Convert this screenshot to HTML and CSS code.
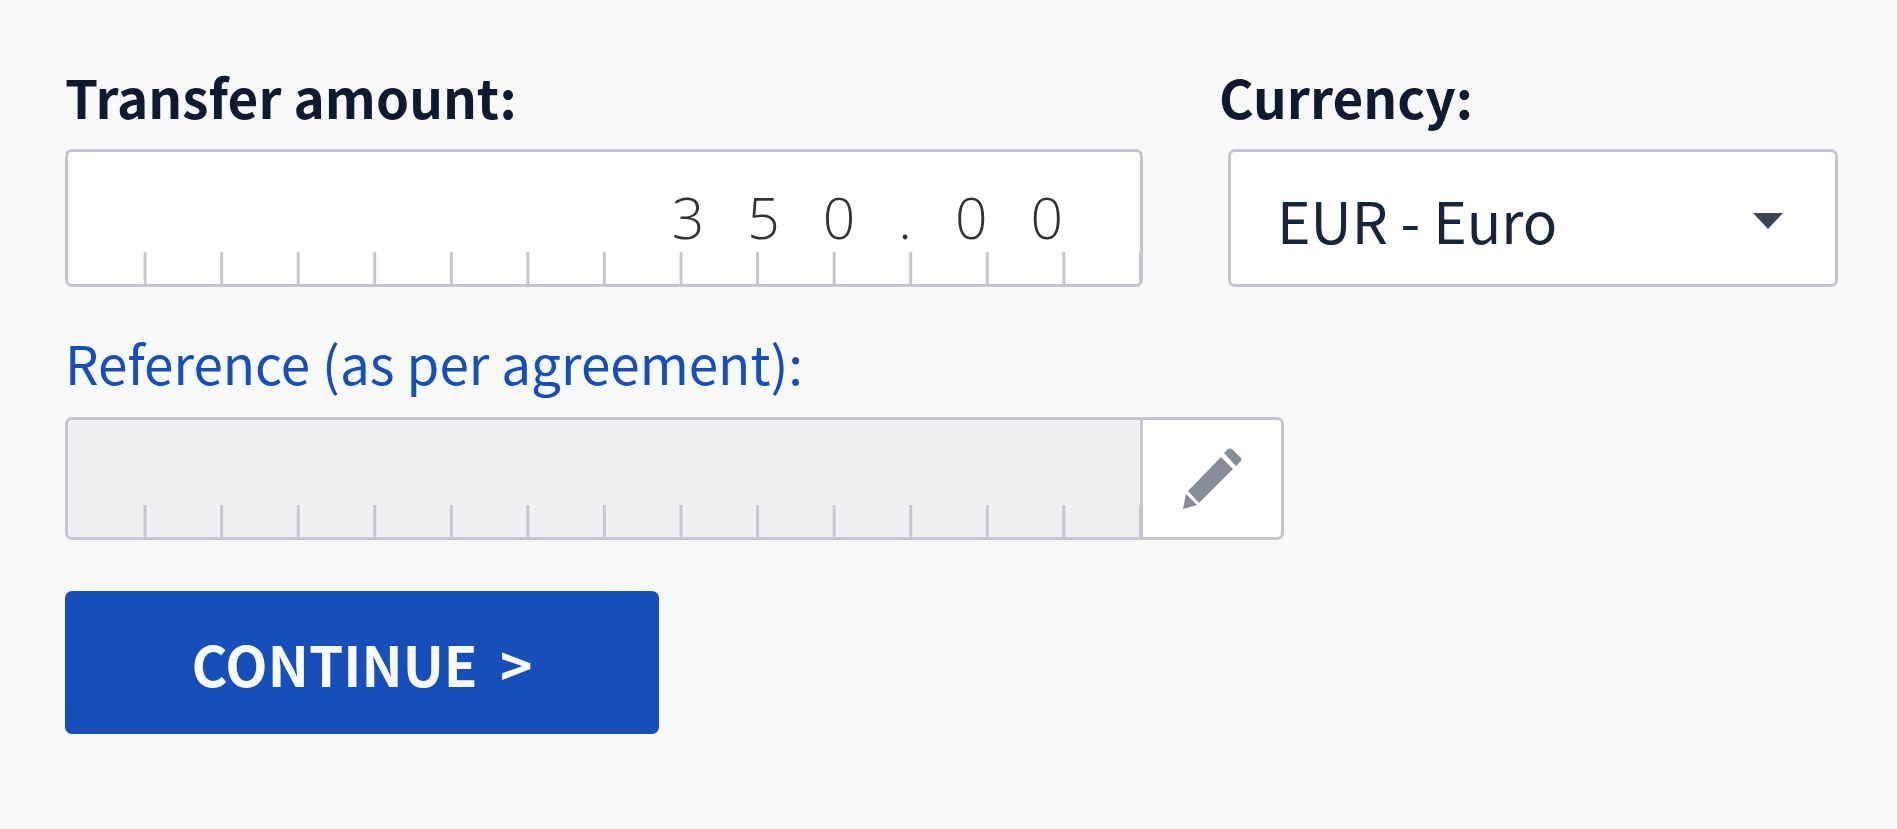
FILE: index.html
```html
<!DOCTYPE html>
<html lang="en">
<head>
    <meta charset="utf-8">
    <title>Transfer</title>
    <link rel="stylesheet" href="styles.css">
</head>
<body>
    <form class="transfer-form">
        <div class="form-row">
            <div class="form-group amount-group">
                <label for="amount">Transfer amount:</label>
                <input type="text" id="amount" class="comb amount" value="350.00" inputmode="decimal">
            </div>
            <div class="form-group currency-group">
                <label for="currency">Currency:</label>
                <div class="select-wrap">
                    <select id="currency">
                        <option value="EUR">EUR - Euro</option>
                    </select>
                    <svg class="arrow" viewBox="0 0 32 16" aria-hidden="true"><path d="M1 0h30L16 16z"/></svg>
                </div>
            </div>
        </div>

        <div class="form-group reference-group">
            <label for="reference" class="label-link">Reference (as per agreement):</label>
            <div class="input-group">
                <input type="text" id="reference" class="comb reference" readonly>
                <button type="button" class="button-edit" aria-label="Edit reference">
                    <svg viewBox="0 0 60 62" aria-hidden="true">
                        <path d="M42 5l4-4q2-1 4 0l9 9q1 2 0 3l-5 5z"/>
                        <path d="M39 9l12 12-34 34L6 43z"/>
                        <path d="M4 46l11 11-14 4z"/>
                    </svg>
                </button>
            </div>
        </div>

        <button type="submit" class="button-continue">CONTINUE <span class="chevron">&gt;</span></button>
    </form>
</body>
</html>
```

FILE: styles.css
```css
* {
    box-sizing: border-box;
}
body {
    margin: 0;
    background-color: #f8f9f9;
    color: #0d1a30;
    font-family: "Noto Sans CJK SC", "Noto Sans", sans-serif;
    font-size: 57px;
}
.transfer-form {
    padding: 65px 59px 60px 65px;
}
.form-row {
    display: flex;
    gap: 76px;
}
.amount-group {
    width: 60.8%;
}
.currency-group {
    flex: 1;
}
label {
    display: block;
    padding-bottom: 22px;
    font-size: 53px;
    font-weight: bold;
    line-height: 62px;
    white-space: nowrap;
}
.label-link {
    padding-bottom: 24px;
    color: #174fba;
    font-weight: normal;
}
input, select, button {
    margin: 0;
    font: inherit;
    color: inherit;
}
input, select {
    display: block;
    width: 100%;
    height: 138px;
    border: 3px solid #c4c7cf;
    border-radius: 7px;
    background-color: #fff;
}
/* one tick per character cell, the first layer hides the tick at the left edge */
.comb {
    --field-color: #fff;
    background-color: var(--field-color);
    background-image:
        linear-gradient(var(--field-color), var(--field-color)),
        linear-gradient(to left, #c4c7cf 3px, transparent 3px);
    background-size: 4px 100%, calc(100% / 14) 32px;
    background-position: left top, left 2px bottom;
    background-repeat: no-repeat, repeat-x;
}
.amount {
    padding: 0 34px 2px 0;
    color: #333;
    font-family: "Open Sans", sans-serif;
    font-weight: 300;
    letter-spacing: 43px;
    text-align: right;
}
.select-wrap {
    position: relative;
    margin-left: 9px;
}
select {
    appearance: none;
    padding: 2px 90px 0 46px;
    color: #18243a;
}
.arrow {
    position: absolute;
    top: 64px;
    right: 54px;
    width: 32px;
    height: 16px;
    fill: #3b4759;
    pointer-events: none;
}
.reference-group {
    margin-top: 44px;
}
.input-group {
    display: flex;
}
.reference {
    --field-color: #eff0f2;
    width: 60.8%;
    height: 123px;
    border-radius: 7px 0 0 7px;
}
.button-edit {
    display: flex;
    align-items: center;
    justify-content: center;
    width: 141px;
    border: 3px solid #c4c7cf;
    border-left: 0;
    border-radius: 0 7px 7px 0;
    background-color: #fff;
    cursor: pointer;
}
.button-edit svg {
    width: 60px;
    height: 62px;
    fill: #868c98;
}
.button-continue {
    width: 594px;
    height: 143px;
    margin-top: 51px;
    border: none;
    border-radius: 7px;
    background-color: #174fba;
    color: #fafbff;
    font-size: 55px;
    font-weight: bold;
    cursor: pointer;
}
.chevron {
    margin-left: 10px;
}
```
